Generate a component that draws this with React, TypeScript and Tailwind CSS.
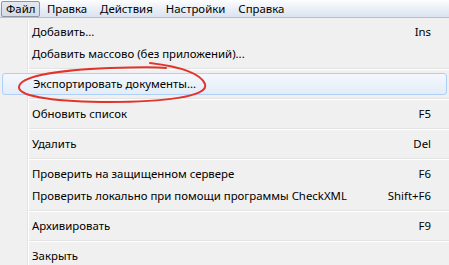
import React from "react";

type Item = { label: string; shortcut?: string; active?: boolean } | "sep";

const items: Item[] = [
  { label: "Добавить...", shortcut: "Ins" },
  { label: "Добавить массово (без приложений)..." },
  "sep",
  { label: "Экспортировать документы...", active: true },
  "sep",
  { label: "Обновить список", shortcut: "F5" },
  "sep",
  { label: "Удалить", shortcut: "Del" },
  "sep",
  { label: "Проверить на защищенном сервере", shortcut: "F6" },
  { label: "Проверить локально при помощи программы CheckXML", shortcut: "Shift+F6" },
  "sep",
  { label: "Архивировать", shortcut: "F9" },
  "sep",
  { label: "Закрыть" },
];

const menus = ["Файл", "Правка", "Действия", "Настройки", "Справка"];

function Gutter() {
  return (
    <>
      <div className="w-[28px] h-full shrink-0 border-r border-[#e2e3e3]" />
      <div className="w-px h-full shrink-0 bg-white" />
    </>
  );
}

export default function App() {
  return (
    <div className="relative w-[449px] h-[265px] overflow-hidden bg-[#f0f0f0] text-[11.4px] text-black font-['Noto_Sans',sans-serif] leading-none">
      {/* menu bar */}
      <div className="h-[18px] flex items-start bg-gradient-to-b from-[#fcfdfe] to-[#dae3f0] border-b border-[#b8bfc9]">
        {menus.map((m, i) =>
          i === 0 ? (
            <div
              key={m}
              className="ml-[1px] mt-[1px] h-[16px] px-[4px] flex items-center border border-[#8d96a3] rounded-[2px] bg-gradient-to-b from-[#e3e8ef] to-[#d3dbe6]"
            >
              {m}
            </div>
          ) : (
            <div key={m} className="h-[17px] px-[6.5px] flex items-center">
              {m}
            </div>
          )
        )}
      </div>

      {/* dropdown */}
      <div className="flex flex-col pt-[3px]">
        {items.map((it, i) => {
          if (it === "sep")
            return (
              <div key={i} className="h-[8px] flex">
                <Gutter />
                <div className="flex-1 flex flex-col justify-center">
                  <div className="h-px bg-[#e2e3e3]" />
                  <div className="h-px bg-white" />
                </div>
              </div>
            );
          if (it.active)
            return (
              <div key={i} className="h-[22px] px-[2px] flex">
                <div className="flex-1 flex items-center pl-[30px] border border-[#aecff7] rounded-[3px] bg-gradient-to-b from-[#f4f8fd] to-[#e3ecf8]">
                  {it.label}
                </div>
              </div>
            );
          return (
            <div key={i} className="h-[22px] flex">
              <Gutter />
              <div className="flex-1 flex items-center justify-between pl-[3px] pr-[18px]">
                <span>{it.label}</span>
                {it.shortcut && <span>{it.shortcut}</span>}
              </div>
            </div>
          );
        })}
      </div>

      {/* red hand-drawn ellipse annotation */}
      <svg className="absolute left-0 top-0 pointer-events-none" width="449" height="265">
        <path
          d="M150 63 C 175 66, 200 72, 205 84 C 210 97, 160 102, 110 102 C 60 102, 18 97, 19 87 C 20 76, 60 70, 110 68 C 140 67, 158 67, 166 68"
          fill="none"
          stroke="#e3342c"
          strokeWidth="2"
          strokeLinecap="round"
        />
      </svg>
    </div>
  );
}
